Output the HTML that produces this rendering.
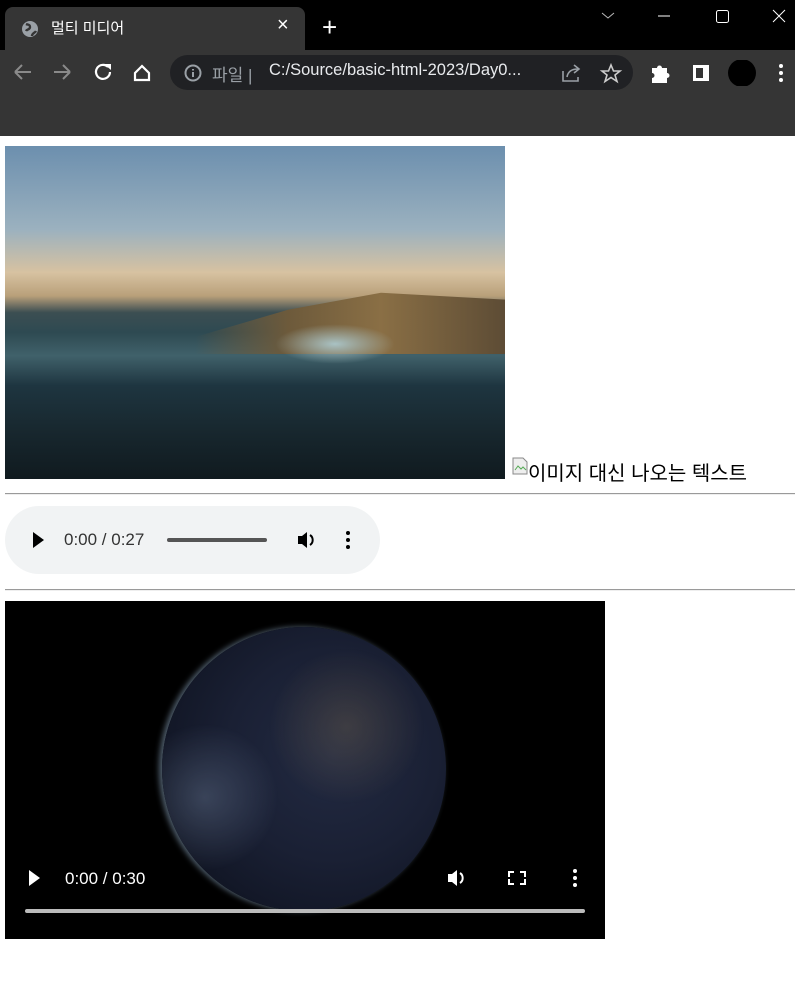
<!DOCTYPE html>
<html><head><meta charset="utf-8"><style>
*{margin:0;padding:0;box-sizing:border-box}
body{width:795px;height:998px;background:#fff;position:relative;overflow:hidden;font-family:"Liberation Sans","Noto Sans CJK KR",sans-serif}
.abs{position:absolute}
</style></head><body>
<div class="abs" style="left:0;top:0;width:795px;height:50px;background:#000"></div>
<div class="abs" style="left:5px;top:7px;width:300px;height:43px;background:#353535;border-radius:8px 8px 0 0"></div>
<svg class="abs" style="left:20px;top:19px" width="20" height="20" viewBox="0 0 20 20"><circle cx="10" cy="10" r="8" fill="#9aa0a6"/><path d="M6 5c2 1 4 0 4 3s-3 2-4 4M12 17c0-3 3-3 4-5" stroke="#353535" stroke-width="2.4" fill="none"/></svg>
<div class="abs" style="left:51px;top:17px;color:#fff;font-size:15px">멀티 미디어</div>
<div class="abs" style="left:277px;top:14px;color:#fff;font-size:20px">×</div>
<div class="abs" style="left:322px;top:12px;color:#fff;font-size:26px;line-height:30px">+</div>
<svg class="abs" style="left:600px;top:8px" width="195" height="20"><path d="M2 5l6 5 6-5" stroke="#bbb" fill="none"/><path d="M58 8h12" stroke="#fff"/><rect x="116.5" y="2.5" width="12" height="12" rx="2" stroke="#fff" fill="none"/><path d="M173 2l12 12M185 2l-12 12" stroke="#fff"/></svg>
<div class="abs" style="left:0;top:50px;width:795px;height:86px;background:#353535"></div>
<svg class="abs" style="left:10px;top:60px" width="150" height="25"><path d="M5 12h16M5 12l7-7M5 12l7 7" stroke="#8a8a8a" stroke-width="2" fill="none"/><path d="M44 12h16M60 12l-7-7M60 12l-7 7" stroke="#8a8a8a" stroke-width="2" fill="none"/><path d="M98 7a7 7 0 1 0 2 5" stroke="#fff" stroke-width="2.2" fill="none"/><path d="M94 4h7v6z" fill="#fff"/><path d="M125 13l7-7 7 7v7h-14z" stroke="#fff" stroke-width="2.2" fill="none"/></svg>
<div class="abs" style="left:170px;top:55px;width:463px;height:35px;background:#202124;border-radius:18px"></div>
<svg class="abs" style="left:183px;top:63px" width="20" height="20"><circle cx="10" cy="10" r="7.5" stroke="#9aa0a6" stroke-width="2" fill="none"/><path d="M10 9v5M10 6v1.5" stroke="#9aa0a6" stroke-width="2"/></svg>
<div class="abs" style="left:212px;top:61px;color:#9aa0a6;font-size:17px">파일 |</div>
<div class="abs" style="left:269px;top:61px;color:#e8eaed;font-size:16.5px">C:/Source/basic-html-2023/Day0...</div>
<svg class="abs" style="left:560px;top:62px" width="70" height="22"><path d="M3 9v10h15v-4M7 15c1-6 5-8 11-8M14 3l5 4-5 4" stroke="#9aa0a6" stroke-width="1.6" fill="none"/><path d="M51 3l2.5 6h6.5l-5 4 2 6.5-6-4-6 4 2-6.5-5-4h6.5z" stroke="#ccc" stroke-width="1.6" fill="none"/></svg>
<svg class="abs" style="left:650px;top:60px" width="145" height="26"><path d="M2 8h5a2.5 2.5 0 0 1 5 0h5v5a2.5 2.5 0 0 1 0 5v5h-15v-5a2.5 2.5 0 0 0 0-5z" fill="#fff"/><rect x="43" y="5" width="16" height="16" fill="#fff"/><rect x="46" y="8" width="7" height="10" fill="#353535"/><circle cx="92" cy="13" r="14" fill="#000"/><circle cx="131" cy="6" r="2" fill="#fff"/><circle cx="131" cy="13" r="2" fill="#fff"/><circle cx="131" cy="20" r="2" fill="#fff"/></svg>

<div class="abs" style="left:5px;top:146px;width:500px;height:333px;overflow:hidden;background:linear-gradient(180deg,#6c8fae 0%,#9bb1bf 25%,#d7c2a1 38%,#b9a07a 45%,#3c4e52 50%,#2e4a52 56%,#40616a 63%,#1e3540 72%,#18282f 85%,#101a1f 100%)">
<div class="abs" style="left:190px;top:140px;width:310px;height:68px;background:linear-gradient(90deg,rgba(80,70,50,0) 0%,#6d5a3b 30%,#8a6f45 60%,#5d4c35 100%);clip-path:polygon(0 75%,30% 35%,60% 10%,100% 20%,100% 100%,0 100%)"></div>
<div class="abs" style="left:270px;top:178px;width:120px;height:40px;border-radius:50%;background:radial-gradient(ellipse,#a9c2c4 0%,rgba(120,150,160,0) 70%)"></div>
</div>
<svg class="abs" style="left:512px;top:457px" width="16" height="18"><path d="M1 1h10l4 4v12H1z" fill="#eee" stroke="#888"/><path d="M3 13l3-4 3 3 2-2 3 3" stroke="#5a5" fill="none"/></svg>
<div class="abs" style="left:528px;top:457px;font-size:20px;color:#000">이미지 대신 나오는 텍스트</div>
<div class="abs" style="left:5px;top:493px;width:790px;height:2px;border-top:1px solid #9a9a9a;border-bottom:1px solid #eee"></div>
<div class="abs" style="left:5px;top:506px;width:375px;height:68px;background:#f1f3f4;border-radius:34px"></div>
<svg class="abs" style="left:30px;top:530px" width="340" height="20"><path d="M3 2l11 8-11 8z" fill="#000"/><rect x="137" y="8" width="100" height="4" rx="2" fill="#555"/><path d="M268 6h4l5-4v16l-5-4h-4z" fill="#000"/><path d="M280 5a6 6 0 0 1 0 10" stroke="#000" stroke-width="2" fill="none"/><circle cx="318" cy="3" r="2" fill="#000"/><circle cx="318" cy="10" r="2" fill="#000"/><circle cx="318" cy="17" r="2" fill="#000"/></svg>
<div class="abs" style="left:64px;top:530px;font-size:17px;color:#333">0:00 / 0:27</div>
<div class="abs" style="left:5px;top:589px;width:790px;height:2px;border-top:1px solid #9a9a9a;border-bottom:1px solid #eee"></div>
<div class="abs" style="left:5px;top:601px;width:600px;height:338px;background:#000;overflow:hidden">
<div class="abs" style="left:157px;top:26px;width:284px;height:284px;border-radius:50%;background:radial-gradient(circle at 60% 45%,#222a42 0%,#1a2034 45%,#131828 70%,#0a0c14 100%);box-shadow:-3px 0 6px rgba(160,190,220,.5)"></div>
<div class="abs" style="left:157px;top:26px;width:284px;height:284px;border-radius:50%;background:radial-gradient(circle at 65% 35%,rgba(200,160,90,.18) 0%,rgba(0,0,0,0) 30%),radial-gradient(circle at 15% 60%,rgba(140,160,190,.3) 0%,rgba(0,0,0,0) 25%)"></div>
</div>
<svg class="abs" style="left:25px;top:868px" width="565" height="50"><path d="M4 2l11 8-11 8z" fill="#fff"/><path d="M423 6h4l5-4v16l-5-4h-4z" fill="#fff"/><path d="M435 5a6 6 0 0 1 0 10" stroke="#fff" stroke-width="2" fill="none"/><path d="M484 9V4h5M495 4h5v5M500 11v5h-5M489 16h-5v-5" stroke="#fff" stroke-width="2" fill="none"/><circle cx="550" cy="3" r="2" fill="#fff"/><circle cx="550" cy="10" r="2" fill="#fff"/><circle cx="550" cy="17" r="2" fill="#fff"/><rect x="0" y="41" width="560" height="4" rx="2" fill="#bbb"/></svg>
<div class="abs" style="left:65px;top:869px;font-size:17px;color:#fff">0:00 / 0:30</div>
</body></html>
